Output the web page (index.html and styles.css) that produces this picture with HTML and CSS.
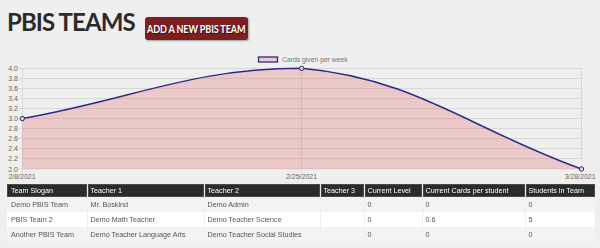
FILE: index.html
```html
<!DOCTYPE html>
<html>
<head>
<meta charset="utf-8">
<link rel="stylesheet" href="styles.css">
</head>
<body>
<header class="top">
  <h1 class="title">PBIS TEAMS</h1>
  <a class="btn-add" href="#"><span class="btn-label">ADD A NEW PBIS TEAM</span></a>
</header>
<section class="chart">
  <svg class="chart-svg" width="600" height="130" viewBox="0 0 600 130" xmlns="http://www.w3.org/2000/svg">
    <g class="grid" stroke="#d9d9d9" stroke-width="1">
      <line x1="19" y1="18.5" x2="582" y2="18.5"/>
      <line x1="19" y1="28.5" x2="582" y2="28.5"/>
      <line x1="19" y1="38.5" x2="582" y2="38.5"/>
      <line x1="19" y1="48.5" x2="582" y2="48.5"/>
      <line x1="19" y1="58.5" x2="582" y2="58.5"/>
      <line x1="19" y1="68.5" x2="582" y2="68.5"/>
      <line x1="19" y1="78.5" x2="582" y2="78.5"/>
      <line x1="19" y1="88.5" x2="582" y2="88.5"/>
      <line x1="19" y1="98.5" x2="582" y2="98.5"/>
      <line x1="19" y1="108.5" x2="582" y2="108.5"/>
      <line x1="19" y1="119" x2="582" y2="119"/>
      <line x1="22.5" y1="18" x2="22.5" y2="123"/>
      <line x1="301.5" y1="18" x2="301.5" y2="123"/>
      <line x1="581.5" y1="18" x2="581.5" y2="123"/>
    </g>
    <g class="ylabels" font-family="Liberation Sans, Arial, sans-serif" font-size="7" fill="#666" text-anchor="end">
      <text x="18" y="21">4.0</text>
      <text x="18" y="31">3.8</text>
      <text x="18" y="41">3.6</text>
      <text x="18" y="51">3.4</text>
      <text x="18" y="61">3.2</text>
      <text x="18" y="71">3.0</text>
      <text x="18" y="81">2.8</text>
      <text x="18" y="91">2.6</text>
      <text x="18" y="101">2.4</text>
      <text x="18" y="111">2.2</text>
      <text x="18" y="121.5">2.0</text>
    </g>
    <g class="xlabels" font-family="Liberation Sans, Arial, sans-serif" font-size="7" fill="#666" text-anchor="middle">
      <text x="22" y="128.5">2/8/2021</text>
      <text x="301.5" y="128.5">2/25/2021</text>
      <text x="580" y="128.5">3/28/2021</text>
    </g>
    <path d="M22.3,68.6 C134.1,48.5 192.4,18.3 301.7,18.3 C416.1,28.6 469.6,78.7 581.5,119 L22.3,119 Z" fill="rgb(225,20,20)" fill-opacity="0.17"/>
    <path d="M22.3,68.6 C134.1,48.5 192.4,18.3 301.7,18.3 C416.1,28.6 469.6,78.7 581.5,119" fill="none" stroke="#2e2a86" stroke-width="1.5"/>
    <g fill="#eccaca" stroke="#2e2a86" stroke-width="1">
      <circle cx="22.3" cy="68.6" r="2.2"/>
      <circle cx="301.7" cy="18.3" r="2.2"/>
      <circle cx="581.5" cy="119" r="2.2"/>
    </g>
    <rect x="258.5" y="7" width="19" height="5" fill="#eccaca" stroke="#2e2a86" stroke-width="1.3"/>
    <text x="282" y="11.8" font-family="Liberation Sans, Arial, sans-serif" font-size="6.8" fill="#777">Cards given per week</text>
  </svg>
</section>
<table class="teams">
  <colgroup>
    <col class="c-slogan"><col class="c-t1"><col class="c-t2"><col class="c-t3"><col class="c-level"><col class="c-cards"><col class="c-students">
  </colgroup>
  <thead>
    <tr><th>Team Slogan</th><th>Teacher 1</th><th>Teacher 2</th><th>Teacher 3</th><th>Current Level</th><th>Current Cards per student</th><th>Students in Team</th></tr>
  </thead>
  <tbody>
    <tr><td>Demo PBIS Team</td><td>Mr. Boskind</td><td>Demo Admin</td><td></td><td>0</td><td>0</td><td>0</td></tr>
    <tr><td>PBIS Team 2</td><td>Demo Math Teacher</td><td>Demo Teacher Science</td><td></td><td>0</td><td>0.6</td><td>5</td></tr>
    <tr><td>Another PBIS Team</td><td>Demo Teacher Language Arts</td><td>Demo Teacher Social Studies</td><td></td><td>0</td><td>0</td><td>0</td></tr>
  </tbody>
</table>
</body>
</html>
```
FILE: styles.css
```css
html, body {
  margin: 0;
  padding: 0;
}
body {
  background: #efefef;
  width: 600px;
  height: 248px;
  overflow: hidden;
  font-family: "Liberation Sans", Arial, sans-serif;
}
.top {
  display: flex;
  align-items: flex-start;
  height: 50px;
  box-sizing: border-box;
  padding: 10px 0 0 7px;
}
.title {
  margin: 0;
  font-family: Lato, "Open Sans", sans-serif;
  font-weight: 700;
  font-size: 24px;
  line-height: 24px;
  letter-spacing: -0.9px;
  color: #2b2b2b;
}
.btn-add {
  margin: 7px 0 0 10px;
  width: 103px;
  height: 23px;
  box-sizing: border-box;
  display: flex;
  align-items: center;
  justify-content: center;
  background: #7e1f1f;
  border-radius: 3px;
  box-shadow: 1px 1px 2px rgba(0, 0, 0, 0.35);
  color: #fff;
  text-decoration: none;
  font-family: Lato, "Open Sans", sans-serif;
  font-weight: 700;
  font-size: 11px;
  letter-spacing: -0.2px;
  white-space: nowrap;
  text-shadow: 1px 1px 1px rgba(0, 0, 0, 0.6);
}
.btn-label {
  display: inline-block;
  transform: scaleX(0.83);
}
.chart-svg {
  display: block;
}
.teams {
  margin: 4px 0 0 7px;
  width: 588px;
  table-layout: fixed;
  border-collapse: collapse;
  font-size: 7.2px;
  will-change: transform;
}
.c-slogan { width: 80px; }
.c-t1 { width: 117px; }
.c-t2 { width: 116px; }
.c-t3 { width: 44px; }
.c-level { width: 58px; }
.c-cards { width: 103px; }
.c-students { width: 70px; }
.teams th {
  background: #2b2b2b;
  color: #fff;
  font-weight: 400;
  text-align: left;
  height: 13px;
  padding: 0 2px 0 3px;
  border-left: 1px solid #e6e6e6;
  box-shadow: inset 0 0 0 1px #4a4a4a;
  white-space: nowrap;
  overflow: hidden;
}
.teams th:first-child {
  border-left: none;
  padding-left: 4px;
}
.teams td {
  color: #555;
  height: 15px;
  padding: 0 2px 0 3px;
  border-left: 1px solid transparent;
  white-space: nowrap;
  overflow: hidden;
}
.teams td:first-child {
  border-left: none;
  padding-left: 4px;
}
.teams tbody tr:nth-child(odd) td {
  background: #f3f3f3;
}
.teams tbody tr:nth-child(even) td {
  background: #ffffff;
}
```
